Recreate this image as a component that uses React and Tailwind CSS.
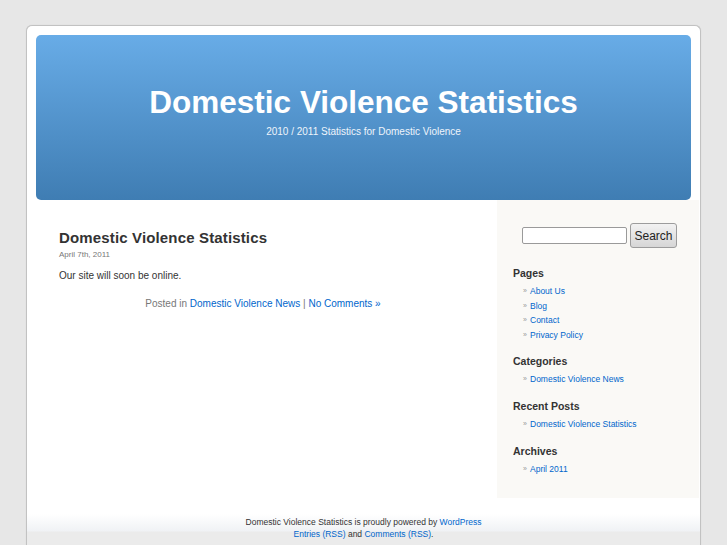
import React from 'react'

const pages = ['About Us', 'Blog', 'Contact', 'Privacy Policy']

const widgets = [
  { title: 'Pages', items: pages },
  { title: 'Categories', items: ['Domestic Violence News'] },
  { title: 'Recent Posts', items: ['Domestic Violence Statistics'] },
  { title: 'Archives', items: ['April 2011'] },
]

const Widget = ({ title, items }) => (
  <div className="mb-[12px]">
    <h2 className="h-[14px] text-[10.5px] leading-[14px] font-bold text-[#333]">{title}</h2>
    <ul className="mt-[4px]">
      {items.map(item => (
        <li key={item} className="flex h-[14.6px] items-center pl-[10px] text-[8.5px] leading-[14.6px]">
          <span className="w-[7px] text-[7px] text-[#999]">»</span>
          <a href="#" className="text-[#0066cc]">{item}</a>
        </li>
      ))}
    </ul>
  </div>
)

export default function App() {
  return (
    <div className="min-h-[545px] overflow-hidden bg-[#e7e7e7] pt-[25px] font-['Liberation_Sans',Arial,sans-serif]">
      <div className="ml-[26px] flex min-h-[520px] w-[675px] flex-col rounded-t-[6px] border border-b-0 border-[#c2c2c2] bg-white shadow-[0_0_1px_rgba(0,0,0,0.15)]">
        {/* Header */}
        <div className="px-[9px] pt-[9px]">
          <div className="h-[165px] rounded-[5px] bg-gradient-to-b from-[#68ace7] to-[#3f7db3] pt-[51px] text-center text-white">
            <h1 className="text-[31.5px] leading-[32px] font-bold">Domestic Violence Statistics</h1>
            <p className="mt-[8px] text-[10px] leading-[12px] text-[#eef4fb]">2010 / 2011 Statistics for Domestic Violence</p>
          </div>
        </div>

        {/* Body */}
        <div className="flex">
          <div className="w-[440px] pl-[32px] pt-[29px] text-[#333]">
            <h2 className="text-[15px] leading-[18px] font-bold tracking-[0.15px] text-[#333]">Domestic Violence Statistics</h2>
            <small className="mt-[3px] block text-[8px] leading-[10px] text-[#777]">April 7th, 2011</small>
            <p className="mt-[9px] text-[10px] leading-[13px] text-[#333]">Our site will soon be online.</p>
            <p className="mt-[15px] text-center text-[10px] leading-[13px] text-[#777]">
              Posted in <a href="#" className="text-[#0066cc]">Domestic Violence News</a> | <a href="#" className="text-[#0066cc]">No Comments »</a>
            </p>
          </div>

          <div className="ml-[30px] w-[202px] bg-[#faf9f6] pb-[10px] pl-[16px] pt-[23px]">
            <form className="mb-[18px] flex items-center pl-[9px]" onSubmit={e => e.preventDefault()}>
              <input
                type="text"
                className="h-[17px] w-[105px] rounded-[2px] border border-[#9a9a9a] bg-white"
              />
              <button
                type="submit"
                className="ml-[3px] h-[25px] w-[47px] rounded-[3px] border border-[#9c9c9c] bg-gradient-to-b from-[#f2f2f2] to-[#d6d6d6] text-[12px] text-[#222]"
              >
                Search
              </button>
            </form>
            {widgets.map(w => (
              <Widget key={w.title} {...w} />
            ))}
          </div>
        </div>

        {/* Footer */}
        <div className="mt-[13px] flex-1 bg-[linear-gradient(to_bottom,#ffffff_0px,#ffffff_3px,#f0f2f5_20px,#ebebeb_21px,#ebebeb_100%)] pt-[5px] text-center text-[8.5px] leading-[12px] text-[#333]">
          <p>
            Domestic Violence Statistics is proudly powered by <a href="#" className="text-[#0066cc]">WordPress</a>
            <br />
            <a href="#" className="text-[#0066cc]">Entries (RSS)</a> and <a href="#" className="text-[#0066cc]">Comments (RSS)</a>.
          </p>
        </div>
      </div>
    </div>
  )
}
